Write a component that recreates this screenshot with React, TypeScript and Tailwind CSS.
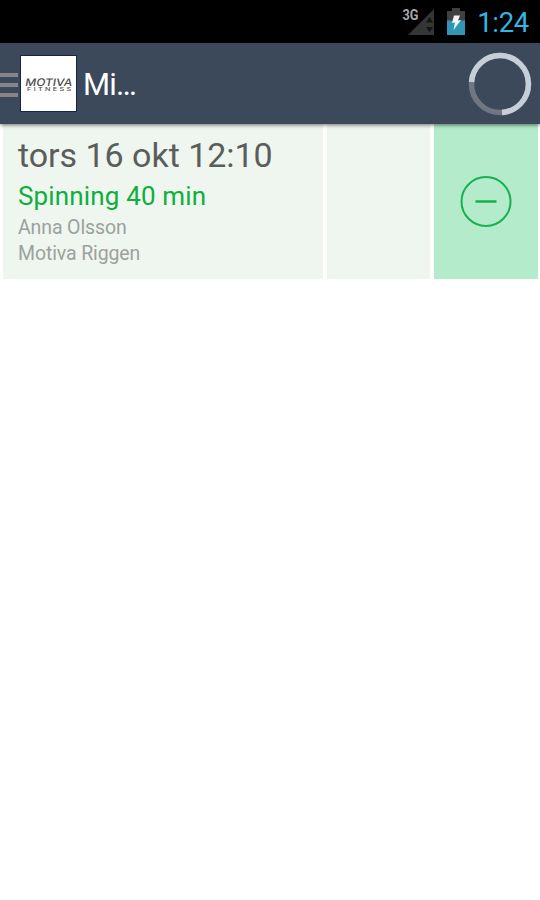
const StatusBar = () => (
  <div className="flex h-[43px] shrink-0 items-start justify-end bg-black">
    {/* Signal strength */}
    <svg width="34" height="36" viewBox="0 0 34 36" className="mr-[11px]">
      <path d="M32 9V35H6Z" fill="#353535" />
      <path d="M27.500 17l3.500 5.500h-7zM27.500 32.500l3.500-5.500h-7z" fill="#151515" />
      <text
        x="0.500"
        y="19.500"
        fill="#a8a8a8"
        fontSize="15"
        fontWeight="700"
        textLength="16"
        lengthAdjust="spacingAndGlyphs"
        fontFamily="Roboto, sans-serif"
      >
        3G
      </text>
    </svg>
    {/* Battery */}
    <svg width="18" height="36" viewBox="0 0 18 36" className="mr-[12px]">
      <path d="M5 8h8v3h5v10H0V11h5z" fill="#404040" />
      <path d="M0 20.500h18V35H0z" fill="#3295b8" />
      <path d="M7 15.500h6l-2 5 3-.5-7.500 10 1.500-7.500-3 .5z" fill="#f4f4f4" />
    </svg>
    <span className="mr-[11px] mt-[7px] text-[27.5px] leading-[32px] tracking-[-0.3px] text-[#33b5e5]">
      1:24
    </span>
  </div>
);

const Logo = () => (
  <div className="ml-[2px] h-[57px] w-[57px] border border-[#12264c] bg-white">
    <svg width="55" height="55" viewBox="0 0 55 55">
      <g fill="#4c4c4c" fontFamily="Inter, sans-serif">
        <text
          x="9"
          y="30"
          fontSize="10.5"
          fontWeight="500"
          textLength="47"
          lengthAdjust="spacingAndGlyphs"
          transform="skewX(-10)"
        >
          MOTIVA
        </text>
        <text
          x="6"
          y="35.500"
          fontSize="5"
          fontWeight="500"
          letterSpacing="1.600"
          transform="translate(-2.600 0) scale(1.450 1)"
        >
          FITNESS
        </text>
      </g>
    </svg>
  </div>
);

const Spinner = () => (
  <svg width="64" height="64" viewBox="0 0 64 64" fill="none" strokeWidth="5.500">
    <circle cx="32" cy="32" r="28.500" stroke="#707780" />
    <path d="M3.500 30A28.500 28.500 0 1 1 34 60.500" stroke="#c6ced8" />
  </svg>
);

const ActionBar = () => (
  <header className="relative z-10 flex h-[81px] shrink-0 items-center bg-[#3b495b] shadow-[0_1px_4px_rgba(0,0,0,0.55)]">
    <div className="mt-[2px] flex w-[18px] flex-col gap-[6px]">
      <span className="h-[4px] bg-[#85858a]" />
      <span className="h-[4px] bg-[#85858a]" />
      <span className="h-[4px] bg-[#85858a]" />
    </div>
    <Logo />
    <h1 className="ml-[6px] mt-[3px] text-[31px] leading-[36px] tracking-[-0.8px] text-white">Mi…</h1>
    <div className="ml-auto mr-[8px]">
      <Spinner />
    </div>
  </header>
);

const BookingRow = () => (
  <div className="flex h-[155px] pl-[3px]">
    <div className="mr-[4px] w-[320px] bg-[#eef6ef] pl-[15px] pt-[11px]">
      <p className="text-[34px] leading-[40px] tracking-[-0.03px] text-[#5b5d5b]">
        tors 16 okt 12:10
      </p>
      <p className="mt-[5px] text-[26px] leading-[32px] tracking-[0.15px] text-[#0fae3d]">
        Spinning 40 min
      </p>
      <p className="mt-[3px] text-[19.5px] leading-[26px] tracking-[-0.12px] text-[#9da19e]">
        Anna Olsson
      </p>
      <p className="text-[19.5px] leading-[26px] tracking-[-0.12px] text-[#9da19e]">
        Motiva Riggen
      </p>
    </div>
    <div className="mr-[4px] w-[103px] bg-[#eef6ef]" />
    <button className="flex w-[104px] items-center justify-center bg-[#b4ebcb] pr-px">
      <svg width="52" height="52" viewBox="0 0 52 52" fill="none" stroke="#17b14f" strokeWidth="2">
        <circle cx="26" cy="25.500" r="24.500" />
        <path d="M15.500 25.500h21" strokeWidth="2.500" />
      </svg>
    </button>
  </div>
);

const App = () => (
  <div className="flex h-[900px] w-[540px] flex-col overflow-hidden bg-white font-['Roboto',sans-serif]">
    <StatusBar />
    <ActionBar />
    <BookingRow />
  </div>
);

export default App;
